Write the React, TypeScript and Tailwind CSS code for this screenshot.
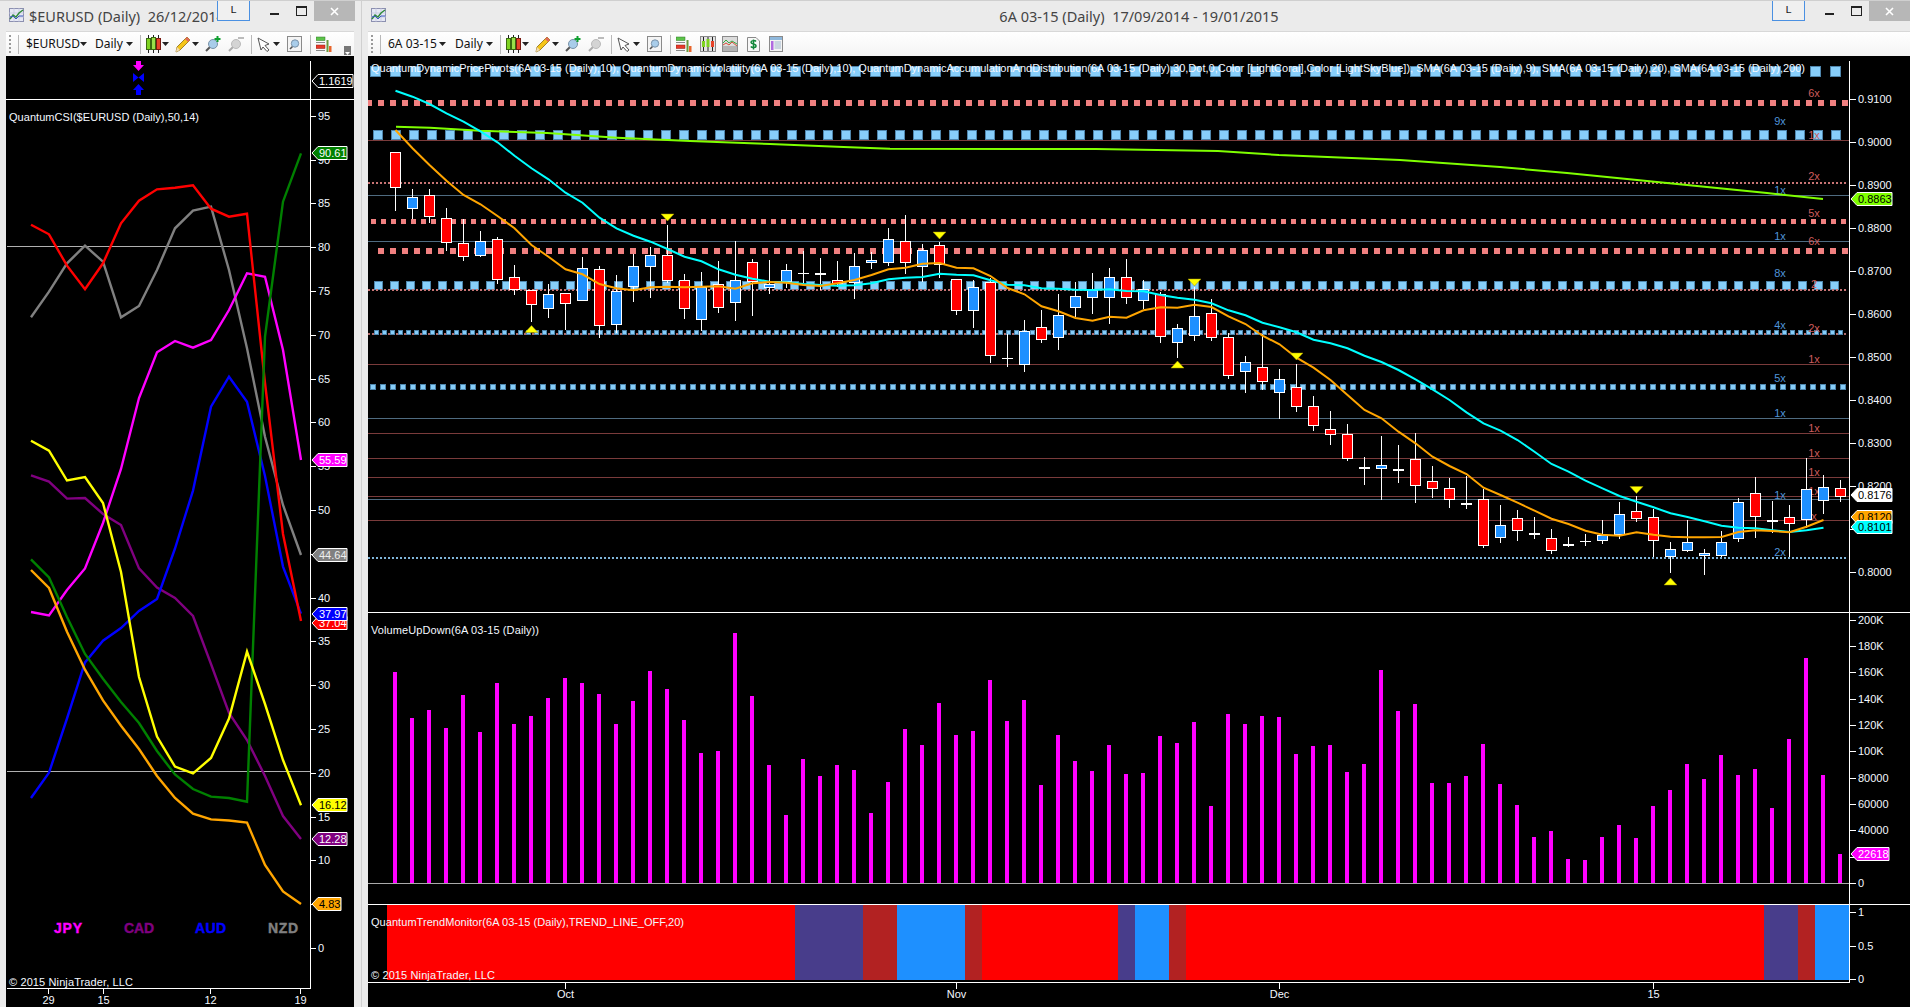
import React from "react";

type C = [number, number, number, number, string];
const cx = (i: number) => 395.5 + 17 * i;
const z3: C[] = [
  [275,452,275,380,"r"],[388,478,412,443,"b"],[388,488,404,469,"r"],[445,572,473,547,"r"],[478,602,550,587,"r"],
  [514,590,542,584,"b"],[532,671,536,656,"r"],[616,704,650,688,"r"],[691,786,691,731,"r"],[673,773,703,743,"b"],
  [698,810,700,728,"r"],[592,719,623,719,"b"],[618,834,626,794,"r"],[645,820,692,791,"b"],[583,725,617,677,"b"],
  [562,713,584,617,"b"],[495,670,584,659,"r"],[643,776,659,743,"r"],[637,812,682,776,"b"],[604,758,671,740,"r"],
  [544,782,659,725,"b"],[598,767,605,662,"r"],[601,701,671,680,"b"],[613,683,629,662,"b"],[574,670,640,641,"d"],
  [595,690,640,643,"D"],[604,680,659,670,"r"],[580,716,617,665,"b"],[577,627,601,607,"b"],
];
const z4: C[] = [
  [85,198,118,187,"b"],[45,222,122,185,"r"],[133,245,149,197,"b"],[125,235,134,191,"r"],[236,345,236,331,"r"],
  [240,384,260,329,"b"],[235,488,245,466,"r"],[402,500,474,476,"d"],[361,516,392,491,"b"],[330,429,380,418,"r"],
  [283,450,344,412,"b"],[247,350,287,320,"b"],[220,342,270,290,"b"],[205,372,230,290,"b"],[178,311,230,290,"r"],
  [241,328,266,299,"b"],[277,429,281,409,"r"],[373,474,383,425,"b"],[260,423,347,404,"b"],[298,423,338,412,"r"],
  [400,537,410,526,"r"],[469,579,485,512,"b"],[402,570,500,542,"r"],[508,657,536,575,"b"],[492,636,560,617,"r"],
  [589,692,617,674,"r"],[633,735,688,701,"r"],[672,783,701,773,"r"],[771,855,802,805,"D"],
];
const z5: C[] = [
  [108,300,196,205,"b"],[135,248,207,211,"D"],[100,308,176,256,"r"],[198,293,244,265,"r"],[234,323,263,298,"r"],
  [228,326,309,313,"D"],[268,443,298,436,"r"],[316,428,376,412,"b"],[331,422,355,391,"r"],[351,416,399,403,"D"],
  [388,461,415,451,"r"],[411,441,433,437,"D"],[403,437,423,425,"d"],[360,431,405,421,"b"],[306,416,341,401,"b"],
  [288,365,334,355,"r"],[326,470,350,421,"r"],[427,520,448,469,"b"],[360,457,427,451,"b"],[447,524,460,466,"b"],
  [393,470,425,466,"b"],[295,425,305,415,"b"],[232,415,278,349,"r"],[304,398,360,364,"D"],[316,472,350,370,"r"],
  [175,385,268,358,"b"],[226,342,260,301,"b"],[241,305,265,287,"r"],
];
const candles: C[] = [
  ...z3.map((c) => [60 + c[0] / 3, 60 + c[1] / 3, 60 + c[2] / 3, 60 + c[3] / 3, c[4]] as C),
  ...z4.map((c) => [200 + c[0] / 3, 200 + c[1] / 3, 200 + c[2] / 3, 200 + c[3] / 3, c[4]] as C),
  ...z5.map((c) => [400 + c[0] / 3, 400 + c[1] / 3, 400 + c[2] / 3, 400 + c[3] / 3, c[4]] as C),
];

const series = (a: number[], b: number[], c: number[]) =>
  [...a.map((v) => 60 + v / 3), ...b.map((v) => 200 + v / 3), ...c.map((v) => 400 + v / 3)]
    .map((y, i) => `${cx(i)},${y.toFixed(1)}`)
    .join(" ");
const cyan = series(
  [92,110,132,160,185,214,247,287,325,358,398,428,473,505,527,545,567,590,604,628,644,656,665,667,672,675,677,676,670],
  [238,233,231,221,224,226,241,254,256,265,266,269,270,268,273,274,285,293,299,310,331,346,368,382,397,419,430,445,467,486,510],
  [-62,-32,0,37,70,92,120,155,192,215,242,265,288,305,322,340,351,364,377,383,385,391,396,391,383],
);
const orange = series(
  [210,265,315,362,405,433,468,505,555,590,628,643,672,685,691,682,680,682,680,679,686,670,666,668,675,678,670,660,645],
  [208,203,191,189,203,205,228,264,283,319,334,354,362,350,353,331,322,323,314,321,349,372,407,433,473,503,540,585,630],
  [55,95,130,170,198,222,263,285,308,332,356,372,392,404,407,397,404,410,412,412,411,396,391,393,397,380,360],
);
const green =
  "396,126.7 430,127.7 480,130.7 547,133 617,137.7 690,141 770,144 837,146.7 870,148 890,148.7 1096,149 1218,151 1279,155 1400,160 1500,167 1567,173 1667,183 1767,193 1823,199";

const volTop = [
  ...[216,354,330,384,285,396,249,372,348,294,234,249,282,372,303,213,267,360,459,453,99,288,495,645,477,528,495,510,639,546,387,435,309,405,
    393,240,363,300,555,405,483,513,435,522,519,408,429,366,618,342,372,348,351,462,438,435,516,492,210,333,312,549,549,528,432,552,615,711,693].map((v) => 600 + v / 3),
  859, 860, 837, 825, 838, 806, 790, 764, 779, 755, 775, 769, 808, 739, 658, 775, 854,
];

const trend: [number, number, string][] = [
  [387,795,"#ff0000"],[795,863,"#483d8b"],[863,897,"#b22222"],[897,965,"#1e90ff"],[965,982,"#b22222"],[982,1118,"#ff0000"],
  [1118,1135,"#483d8b"],[1135,1169,"#1e90ff"],[1169,1186,"#b22222"],[1186,1764,"#ff0000"],[1764,1798,"#483d8b"],[1798,1815,"#b22222"],[1815,1849,"#1e90ff"],
];

const CORAL = "#f08080";
const SKY = "#87cefa";
function Squares({ y, size, step, start, fill, stroke }: { y: number; size: number; step: number; start: number; fill: string; stroke?: string }) {
  const items = [];
  for (let x = start; x < 1849 - size / 2; x += step) {
    items.push(<rect key={x} x={Math.round(x - size / 2)} y={Math.round(y - size / 2)} width={size} height={size} fill={fill} stroke={stroke} strokeWidth={stroke ? 1 : 0} />);
  }
  return <g shapeRendering="crispEdges">{items}</g>;
}
const HLine = ({ y, color }: { y: number; color: string }) => (
  <line x1={368} x2={1849} y1={y} y2={y} stroke={color} strokeWidth={1} shapeRendering="crispEdges" />
);

function Tag({ x, w, y, fill, text, color, stroke = "#ffffff" }: { x: number; w: number; y: number; fill: string; text: string; color: string; stroke?: string }) {
  const h = 6.5;
  return (
    <g>
      <polygon points={`${x},${y} ${x + 6},${y - h} ${x + w},${y - h} ${x + w},${y + h} ${x + 6},${y + h}`} fill={fill} stroke={stroke} strokeWidth={1} />
      <text x={x + 7} y={y + 4} fontSize={11} fill={color}>{text}</text>
    </g>
  );
}

function Tri({ i, top, up }: { i: number; top: number; up?: boolean }) {
  const c = cx(i);
  const p = up ? `${c},${top} ${c - 6.5},${top + 7} ${c + 6.5},${top + 7}` : `${c - 6.5},${top} ${c + 6.5},${top} ${c},${top + 7}`;
  return <polygon points={p} fill="#ffff00" stroke="#a08c00" strokeWidth={0.5} />;
}

const PRICE_LEGEND =
  "QuantumDynamicPricePivots(6A 03-15 (Daily),10), QuantumDynamicVolatility(6A 03-15 (Daily),10), QuantumDynamicAccumulationAndDistribution(6A 03-15 (Daily),30,Dot,0,Color [LightCoral],Color [LightSkyBlue]), SMA(6A 03-15 (Daily),9), SMA(6A 03-15 (Daily),20), SMA(6A 03-15 (Daily),200)";

const TXT = "#f4f8ff";

function MainChart() {
  const priceTicks = Array.from({ length: 12 }, (_, k) => 0.8 + k * 0.01);
  const volTicks: [string, number][] = [
    ["200K",10],["180K",9],["160K",8],["140K",7],["120K",6],["100K",5],["80000",4],["60000",3],["40000",2],["20000",1],["0",0],
  ];
  const redX: [string, number][] = [["6x",93],["1x",135],["2x",176],["5x",213],["6x",241],["2",284],["2x",328],["1x",359],["1x",428],["1x",453],["1x",472],["1x",491],["x",516]];
  const blueX: [string, number][] = [["9x",121],["1x",190],["1x",236],["8x",273],["4x",325],["5x",378],["1x",413],["1x",495],["2x",552]];
  return (
    <svg viewBox="368 56 1542 951" className="w-[1542px] h-[951px] block bg-black">
      <Squares y={70.5} size={10} step={20} start={374.7} fill={SKY} stroke="#4f86ad" />
      <Squares y={103.3} size={6} step={12} start={369.3} fill={CORAL} />
      <Squares y={134.3} size={9} step={18} start={377} fill={SKY} stroke="#4f86ad" />
      <Squares y={182.5} size={2} step={4} start={369} fill="#c87474" />
      <Squares y={221.3} size={5} step={10} start={373} fill={CORAL} />
      <Squares y={251.3} size={6} step={12} start={381.3} fill={CORAL} />
      <Squares y={285} size={8} step={16} start={378.3} fill={SKY} stroke="#4f86ad" />
      <Squares y={289.5} size={2} step={4} start={369} fill="#c87474" />
      <Squares y={334} size={2} step={4} start={369} fill="#b06a6a" />
      <Squares y={332.3} size={4} step={8} start={376} fill={SKY} stroke="#4f86ad" />
      <Squares y={386.3} size={5} step={10} start={372.7} fill={SKY} stroke="#4f86ad" />
      <Squares y={557.5} size={2} step={4} start={369} fill="#7fb4d8" />
      <HLine y={140.5} color="#7a3b3b" />
      <HLine y={195.5} color="#4f6b80" />
      <HLine y={241.5} color="#4f6b80" />
      <HLine y={364.5} color="#7a3b3b" />
      <HLine y={418.5} color="#4f6b80" />
      <HLine y={433.5} color="#7a3b3b" />
      <HLine y={458.5} color="#7a3b3b" />
      <HLine y={477.5} color="#7a3b3b" />
      <HLine y={496.5} color="#7a3b3b" />
      <HLine y={499.5} color="#4f6b80" />
      <HLine y={520.5} color="#7a3b3b" />
      <g fontSize={11}>
        {redX.map(([t, y], i) => <text key={i} x={1814} y={y + 4} textAnchor="middle" fill="#cd5c5c">{t}</text>)}
        {blueX.map(([t, y], i) => <text key={i} x={1780} y={y + 4} textAnchor="middle" fill="#4f94d8">{t}</text>)}
      </g>
      <text x={371} y={72} fontSize={11} fill={TXT} textLength={1434}>{PRICE_LEGEND}</text>

      <g shapeRendering="crispEdges">
        {candles.map((c, i) => {
          const x = cx(i);
          const [wt, wb, bt, bb, k] = c;
          const top = Math.round(bt);
          const bot = Math.round(bb);
          return (
            <g key={i}>
              <line x1={x} x2={x} y1={Math.round(wt)} y2={Math.round(wb)} stroke="#ffffff" strokeWidth={1} />
              {k === "d" || k === "D" ? (
                <rect x={x - 5.5} y={top} width={11} height={k === "D" ? 2 : 1} fill="#ffffff" />
              ) : (
                <rect x={x - 5} y={top + 0.5} width={10} height={Math.max(bot - top, 2)} fill={k === "r" ? "#ff0000" : "#1e90ff"} stroke="#ffffff" strokeWidth={1} />
              )}
            </g>
          );
        })}
      </g>
      <polyline points={green} fill="none" stroke="#7fff00" strokeWidth={2} />
      <polyline points={cyan} fill="none" stroke="#00ffff" strokeWidth={2} />
      <polyline points={orange} fill="none" stroke="#ffa500" strokeWidth={2} />
      <Tri i={16} top={214} />
      <Tri i={8} top={325.5} up />
      <Tri i={32} top={232} />
      <Tri i={46} top={361} up />
      <Tri i={47} top={279} />
      <Tri i={53} top={353} />
      <Tri i={73} top={486.5} />
      <Tri i={75} top={578} up />

      <g shapeRendering="crispEdges" stroke="#ffffff" strokeWidth={1}>
        <line x1={368} x2={1910} y1={612.5} y2={612.5} />
        <line x1={368} x2={1910} y1={904.5} y2={904.5} />
        <line x1={368} x2={1849.5} y1={982.5} y2={982.5} />
        <line x1={1849.5} x2={1849.5} y1={61} y2={983} />
      </g>
      <line x1={368} x2={1849} y1={883.5} y2={883.5} stroke="#aaaaaa" strokeWidth={1} shapeRendering="crispEdges" />

      <g fontSize={11} fill={TXT}>
        {priceTicks.map((p, k) => {
          const y = 571.7 - k * 43;
          return (
            <g key={k}>
              <line x1={1850} x2={1856} y1={Math.round(y) + 0.5} y2={Math.round(y) + 0.5} stroke="#fff" shapeRendering="crispEdges" />
              <text x={1858} y={y + 4}>{p.toFixed(4)}</text>
            </g>
          );
        })}
        {volTicks.map(([t, k]) => {
          const y = 883 - 26.35 * k;
          return (
            <g key={t}>
              <line x1={1850} x2={1856} y1={Math.round(y) + 0.5} y2={Math.round(y) + 0.5} stroke="#fff" shapeRendering="crispEdges" />
              <text x={1858} y={y + 4}>{t}</text>
            </g>
          );
        })}
        {([["1", 912], ["0.5", 946], ["0", 979]] as [string, number][]).map(([t, y]) => (
          <g key={t}>
            <line x1={1850} x2={1856} y1={y + 0.5} y2={y + 0.5} stroke="#fff" shapeRendering="crispEdges" />
            <text x={1858} y={y + 4}>{t}</text>
          </g>
        ))}
      </g>

      <Tag x={1851} w={41} y={199} fill="#7fff00" text="0.8863" color="#000" />
      <Tag x={1851} w={41} y={495} fill="#ffffff" text="0.8176" color="#000" />
      <Tag x={1851} w={41} y={517} fill="#ffa500" text="0.8120" color="#000" />
      <Tag x={1851} w={41} y={527} fill="#00ffff" text="0.8101" color="#000" />

      <g shapeRendering="crispEdges" fill="#ff00ff">
        {volTop.map((t, i) => <rect key={i} x={393 + 17 * i} y={Math.round(t)} width={4} height={883 - Math.round(t)} />)}
      </g>
      <text x={371} y={634} fontSize={11} fill={TXT} textLength={168}>VolumeUpDown(6A 03-15 (Daily))</text>
      <Tag x={1851} w={38} y={854} fill="#ff00ff" text="22618" color="#fff" />

      <g shapeRendering="crispEdges">
        {trend.map(([a, b, c]) => <rect key={a} x={a} y={905} width={b - a} height={75} fill={c} />)}
      </g>
      <text x={371} y={926} fontSize={11} fill={TXT} textLength={313}>QuantumTrendMonitor(6A 03-15 (Daily),TREND_LINE_OFF,20)</text>
      <text x={371} y={979} fontSize={11} fill={TXT} textLength={124}>© 2015 NinjaTrader, LLC</text>

      <g fontSize={11} fill={TXT} textAnchor="middle">
        {([["Oct", 565.5], ["Nov", 956.5], ["Dec", 1279.5], ["15", 1653.5]] as [string, number][]).map(([t, x]) => (
          <g key={t}>
            <line x1={x} x2={x} y1={983} y2={989} stroke="#fff" shapeRendering="crispEdges" />
            <text x={x} y={998}>{t}</text>
          </g>
        ))}
      </g>
    </svg>
  );
}

const LX = [31, 49, 67, 85, 103, 121, 139, 157, 175, 193, 211, 229, 247, 265, 283, 301];
const csi: [string, number[]][] = [
  ["#808080", [317.3,291.7,263.3,245.7,261.7,317.3,306,270,228.3,210.7,206.7,270,348.3,436.7,505,555]],
  ["#800080", [475.4,481.6,498.6,498,514,525,568.4,587.6,598,616,664,713,740,776,816,839]],
  ["#ff00ff", [612,615.4,590,568.4,523,469,398,352.3,341,347.7,340,310,273.3,276.7,350,460]],
  ["#0000ff", [798,772.7,718.5,662.4,640.7,628,611,599,548.5,490.6,406.7,376.7,401.7,476,566.6,613.6]],
  ["#ff0000", [224.7,234.3,265.7,289.3,263.3,223.3,200.7,189.3,187.7,185.3,208.7,216.7,213.7,383,534,621]],
  ["#008000", [559.3,577.4,617,654,678.7,702,723,751,774.5,789,796.6,798,801.7,336.7,201.7,153.3]],
  ["#ffff00", [440.7,450.7,480.5,477,503,572,677,736.6,766.6,773.4,758,718.5,651.6,704,760,805.3]],
  ["#ffa500", [570,588,631.7,669.7,700.4,725.7,749,776,798,813.6,819.4,820.5,822.6,865,891.4,904]],
];

function CsiChart() {
  return (
    <svg viewBox="6 56 348 951" className="ml-[6px] w-[348px] h-[951px] block bg-black">
      <g shapeRendering="crispEdges" stroke="#ffffff" strokeWidth={1}>
        <line x1={6} x2={354} y1={99.5} y2={99.5} />
        <line x1={310.5} x2={310.5} y1={61} y2={989} />
        <line x1={7} x2={311} y1={988.5} y2={988.5} />
      </g>
      <line x1={7} x2={310} y1={246.5} y2={246.5} stroke="#b0b0b0" shapeRendering="crispEdges" />
      <line x1={7} x2={310} y1={771.5} y2={771.5} stroke="#b0b0b0" shapeRendering="crispEdges" />
      <polygon points="133,65 136,65 136,61 141,61 141,65 144,65 138.5,71" fill="#ff00ff" />
      <polygon points="133,73 138.5,77.5 144,73 144,82 138.5,77.5 133,82" fill="#0000ff" />
      <polygon points="133,90 136,90 136,95 141,95 141,90 144,90 138.5,84" fill="#0000ff" />
      <text x={9} y={121} fontSize={11} fill={TXT} textLength={190}>QuantumCSI($EURUSD (Daily),50,14)</text>
      {csi.map(([c, v]) => (
        <polyline key={c} points={v.map((y, i) => `${LX[i]},${y}`).join(" ")} fill="none" stroke={c} strokeWidth={2.4} />
      ))}
      <g fontSize={11} fill={TXT}>
        {Array.from({ length: 20 }, (_, k) => k * 5).map((v) => {
          const y = 948 - 8.76 * v;
          return (
            <g key={v}>
              <line x1={311} x2={316} y1={Math.round(y) + 0.5} y2={Math.round(y) + 0.5} stroke="#fff" shapeRendering="crispEdges" />
              <text x={318} y={y + 4}>{v}</text>
            </g>
          );
        })}
      </g>
      <Tag x={312} w={41} y={81} fill="#000000" text="1.1619" color="#fff" />
      <Tag x={312} w={35} y={153} fill="#008000" text="90.61" color="#fff" />
      <Tag x={312} w={35} y={460} fill="#ff00ff" text="55.59" color="#fff" />
      <Tag x={312} w={35} y={555} fill="#808080" text="44.64" color="#eee" />
      <Tag x={312} w={35} y={623} fill="#ff0000" text="37.04" color="#fff" />
      <Tag x={312} w={35} y={614} fill="#0000ff" text="37.97" color="#fff" />
      <Tag x={312} w={35} y={805} fill="#ffff00" text="16.12" color="#000" />
      <Tag x={312} w={35} y={839} fill="#800080" text="12.28" color="#fff" />
      <Tag x={312} w={29} y={904} fill="#ffa500" text="4.83" color="#000" />
      <g fontSize={14} fontWeight={700} stroke="currentColor" strokeWidth={0.4}>
        <text x={54} y={933} fill="#ff00ff" color="#ff00ff" textLength={28}>JPY</text>
        <text x={124} y={933} fill="#800080" color="#800080" textLength={30}>CAD</text>
        <text x={195} y={933} fill="#0000ff" color="#0000ff" textLength={31}>AUD</text>
        <text x={268} y={933} fill="#808080" color="#808080" textLength={30}>NZD</text>
      </g>
      <text x={9} y={986} fontSize={11} fill={TXT} textLength={124}>© 2015 NinjaTrader, LLC</text>
      <g fontSize={11} fill={TXT} textAnchor="middle">
        {([["29", 48.5], ["15", 103.5], ["12", 210.5], ["19", 300.5]] as [string, number][]).map(([t, x]) => (
          <g key={t}>
            <line x1={x} x2={x} y1={989} y2={994} stroke="#fff" shapeRendering="crispEdges" />
            <text x={x} y={1004}>{t}</text>
          </g>
        ))}
      </g>
    </svg>
  );
}

const Caret = ({ className = "" }: { className?: string }) => (
  <svg width="7" height="4" viewBox="0 0 7 4" className={`shrink-0 ${className}`}><polygon points="0,0 7,0 3.5,4" fill="#222" /></svg>
);
const Sep = ({ className = "" }: { className?: string }) => <div className={`w-px h-[19px] bg-[#b8b8b8] shrink-0 ${className}`} />;
const Grip = () => (
  <div className="ml-[3px] flex flex-col gap-[2px] shrink-0 w-[2px]">
    {[0, 1, 2, 3, 4].map((i) => <div key={i} className="w-[2px] h-[2px] bg-[#9a9a9a]" />)}
  </div>
);
const CandleIco = ({ className = "" }: { className?: string }) => (
  <svg width="15" height="18" viewBox="0 0 15 18" className={`shrink-0 ${className}`}>
    <path d="M2.5 0v18M7.5 0v18M12.5 0v18" stroke="#222" />
    <rect x="0.5" y="3.5" width="4" height="11" fill="#7ed321" stroke="#3a6a10" />
    <rect x="5.5" y="2.5" width="4" height="12" fill="#9be04a" stroke="#3a6a10" />
    <rect x="10.5" y="3.5" width="4" height="11" fill="#e8442a" stroke="#7a1a10" />
  </svg>
);
const PencilIco = ({ className = "" }: { className?: string }) => (
  <svg width="16" height="17" viewBox="0 0 16 17" className={`shrink-0 ${className}`}>
    <polygon points="12,1 15,4 5,14 1,16 2,11" fill="#f5c518" stroke="#8a6a10" strokeWidth="0.8" />
    <polygon points="12,1 15,4 13,6 10,3" fill="#e06a5a" />
    <polygon points="2,11 5,14 1,16" fill="#f3dcb0" />
  </svg>
);
const ZoomIco = ({ gray, plus, className = "" }: { gray?: boolean; plus?: boolean; className?: string }) => (
  <svg width="16" height="16" viewBox="0 0 16 16" className={`shrink-0 ${className}`}>
    <line x1="1" y1="15" x2="6" y2="10" stroke={gray ? "#aaa" : "#555"} strokeWidth="2" />
    <circle cx="8" cy="8" r="4.5" fill={gray ? "#d4d4d4" : "#a9cdea"} stroke={gray ? "#bbb" : "#7a92a8"} />
    {plus ? <path d="M12.5 0v6M9.5 3h6" stroke="#10a030" strokeWidth="2" /> : null}
    {gray ? <path d="M10 2h6" stroke="#bbb" strokeWidth="2" /> : null}
  </svg>
);
const CursorIco = ({ className = "" }: { className?: string }) => (
  <svg width="14" height="15" viewBox="0 0 14 15" className={`shrink-0 ${className}`}>
    <polygon points="1,1 12,7 8,8.5 12,13 10,14.5 6,10 4,13" fill="#fff" stroke="#555" />
  </svg>
);
const ZoomBoxIco = ({ className = "" }: { className?: string }) => (
  <svg width="15" height="16" viewBox="0 0 15 16" className={`shrink-0 ${className}`}>
    <rect x="0.5" y="0.5" width="14" height="15" fill="#f4f4f4" stroke="#8a8a8a" />
    <line x1="3" y1="13" x2="6" y2="10" stroke="#555" strokeWidth="1.6" />
    <circle cx="8" cy="7.5" r="3.7" fill="#a9cdea" stroke="#7a92a8" />
  </svg>
);
const PropsIco = ({ className = "" }: { className?: string }) => (
  <svg width="16" height="16" viewBox="0 0 16 16" className={`shrink-0 ${className}`}>
    <rect x="0" y="1" width="9" height="3.5" fill="#5cc24a" stroke="#2f7a25" strokeWidth="0.5" />
    <rect x="0" y="9" width="9" height="3.5" fill="#e83a2a" stroke="#8a1a10" strokeWidth="0.5" />
    <rect x="10.5" y="4" width="2" height="12" fill="#6a9a3a" />
    <rect x="13" y="10" width="2.5" height="6" fill="#e8652a" />
    <path d="M0 6.5h9M0 14.5h9" stroke="#888" />
  </svg>
);
const BoxCandlesIco = ({ className = "" }: { className?: string }) => (
  <svg width="16" height="16" viewBox="0 0 16 16" className={`shrink-0 ${className}`}>
    <rect x="0.5" y="0.5" width="15" height="15" fill="#e4e4e4" stroke="#8a8a8a" />
    <path d="M3.5 1v14M8 1v14M12.5 1v14" stroke="#222" />
    <rect x="2" y="5" width="3" height="6" fill="#7ed321" />
    <rect x="6.5" y="3" width="3" height="8" fill="#7ed321" />
    <rect x="11" y="5" width="3" height="6" fill="#e8442a" />
  </svg>
);
const AreaIco = ({ className = "" }: { className?: string }) => (
  <svg width="16" height="16" viewBox="0 0 16 16" className={`shrink-0 ${className}`}>
    <rect x="0.5" y="0.5" width="15" height="15" fill="#dcdcdc" stroke="#8a8a8a" />
    <rect x="1" y="10" width="14" height="5" fill="#b4b4b4" />
    <path d="M1 7l3-3 3 3 3-2 5 3" fill="none" stroke="#3aa845" />
    <path d="M1 9l3-2 3 2 3-3 5 4" fill="none" stroke="#d8503a" />
  </svg>
);
const DollarIco = ({ className = "" }: { className?: string }) => (
  <svg width="13" height="15" viewBox="0 0 13 15" className={`shrink-0 ${className}`}>
    <polygon points="0.5,0.5 9,0.5 12.5,4 12.5,14.5 0.5,14.5" fill="#f8f8f8" stroke="#8a8a8a" />
    <path d="M9 4.5c-1-1.4-5-1.2-5 .8 0 2.4 5 1 5 3.6 0 2-4 2-5.2.6M6.5 2.5v10" fill="none" stroke="#12873a" strokeWidth="1.5" />
  </svg>
);
const TableIco = ({ className = "" }: { className?: string }) => (
  <svg width="14" height="16" viewBox="0 0 14 16" className={`shrink-0 ${className}`}>
    <rect x="0.5" y="0.5" width="13" height="15" fill="#f4f4f4" stroke="#8a8a8a" />
    <rect x="1" y="1" width="12" height="3" fill="#8fb8dc" />
    <rect x="2" y="5" width="2.5" height="9" fill="#b06ae0" />
    <path d="M5.5 6h6.500M5.500 8h6.500M5.500 10h6.500M5.500 12h6.500" stroke="#9fb6cc" />
  </svg>
);
const ChartIco = () => (
  <svg width="15" height="14" viewBox="0 0 15 14" className="shrink-0">
    <rect x="0.5" y="0.5" width="14" height="13" fill="#e6e8f4" stroke="#8c90b0" />
    <path d="M0 5h15M0 9h15M5 0v14M10 0v14" stroke="#c0c4dc" strokeWidth="0.7" />
    <path d="M1 11l3-4 3 2 3-4 4-3" fill="none" stroke="#2f8a3a" strokeWidth="1.4" />
    <path d="M1 9l3-1 3 3 3-3 4 0" fill="none" stroke="#3a5ac0" strokeWidth="1" />
  </svg>
);

function TitleBar({ title, className, titleClass }: { title: string; className: string; titleClass: string }) {
  return (
    <div className={`h-[31px] flex items-start shrink-0 border-t border-[#cfcfcf] ${className}`}>
      <div className="mt-[7px]"><ChartIco /></div>
      <div className={`min-w-0 flex-1 overflow-hidden whitespace-pre text-[14.5px] leading-[30px] h-[30px] text-[#444] [font-family:'Noto_Sans',sans-serif] ${titleClass}`}>{title}</div>
      <div className="w-[33px] h-[20px] border-x border-b border-[#4a90e2] bg-[#f0f0f0] flex justify-center items-center text-[11px] text-[#222] shrink-0 [font-family:'Liberation_Mono',monospace]">L</div>
      <div className="w-[14px] h-[20px] ml-[17px] flex items-center justify-center shrink-0"><div className="w-[9px] h-[2px] bg-[#222] mt-[6px]" /></div>
      <div className="w-[14px] h-[20px] ml-[13px] flex items-center justify-center shrink-0"><div className="w-[11px] h-[10px] border border-[#222] border-t-2" /></div>
      <div className="w-[41px] h-[20px] ml-[6px] bg-[#b7b7b7] flex items-center justify-center shrink-0">
        <svg width="9" height="9" viewBox="0 0 9 9"><path d="M1 1l7 7M8 1l-7 7" stroke="#fff" strokeWidth="1.6" /></svg>
      </div>
    </div>
  );
}

function ToolbarTail({ children }: { children?: React.ReactNode }) {
  return (
    <>
      <Sep className="ml-[7px]" />
      <CandleIco className="ml-[5px]" />
      <Caret className="ml-[1px]" />
      <PencilIco className="ml-[6px]" />
      <Caret className="ml-[1px]" />
      <ZoomIco plus className="ml-[6px]" />
      <ZoomIco gray className="ml-[7px]" />
      <Sep className="ml-[7px]" />
      <CursorIco className="ml-[5px]" />
      <Caret className="ml-[2px]" />
      <ZoomBoxIco className="ml-[7px]" />
      <Sep className="ml-[8px]" />
      <PropsIco className="ml-[5px]" />
      {children}
    </>
  );
}

export default function App() {
  return (
    <div className="w-[1910px] h-[1007px] flex overflow-hidden bg-[#ebebeb] [font-family:'Liberation_Sans',Arial,sans-serif]">
      <section className="w-[361px] shrink-0 flex flex-col">
        <TitleBar title="$EURUSD (Daily)  26/12/2014 - 19/01/2015" className="pl-[9px] pr-[6px]" titleClass="pl-[5px]" />
        <div className="ml-[6px] w-[348px] h-[25px] flex items-center bg-gradient-to-b from-white to-[#f4f4f4] text-[12px] text-[#111] border-t border-[#d8d8d8] [font-family:'Noto_Sans',sans-serif]">
          <Grip />
          <Sep className="ml-[7px]" />
          <span className="ml-[7px] w-[49px] whitespace-nowrap">$EURUSD</span>
          <Caret className="ml-[5px]" />
          <span className="ml-[8px] w-[28px]">Daily</span>
          <Caret className="ml-[3px]" />
          <ToolbarTail />
          <div className="ml-auto mr-[3px] mt-[12px] w-[7px] h-[9px] bg-[#777] flex items-end justify-center">
            <svg width="5" height="3" viewBox="0 0 5 3"><polygon points="0,0 5,0 2.5,3" fill="#fff" /></svg>
          </div>
        </div>
        <CsiChart />
      </section>
      <section className="flex-1 min-w-0 flex flex-col border-l border-[#d0d0d0]">
        <TitleBar title="6A 03-15 (Daily)  17/09/2014 - 19/01/2015" className="pl-[9px]" titleClass="pl-[120px] text-center" />
        <div className="ml-[6px] h-[25px] flex items-center bg-gradient-to-b from-white to-[#f4f4f4] text-[12px] text-[#111] border-t border-[#d8d8d8] [font-family:'Noto_Sans',sans-serif]">
          <Grip />
          <Sep className="ml-[7px]" />
          <span className="ml-[7px] w-[45px] whitespace-nowrap">6A 03-15</span>
          <Caret className="ml-[6px]" />
          <span className="ml-[9px] w-[28px]">Daily</span>
          <Caret className="ml-[3px]" />
          <ToolbarTail>
            <BoxCandlesIco className="ml-[8px]" />
            <AreaIco className="ml-[6px]" />
            <DollarIco className="ml-[9px]" />
            <TableIco className="ml-[9px]" />
          </ToolbarTail>
        </div>
        <div className="ml-[6px]"><MainChart /></div>
      </section>
    </div>
  );
}
